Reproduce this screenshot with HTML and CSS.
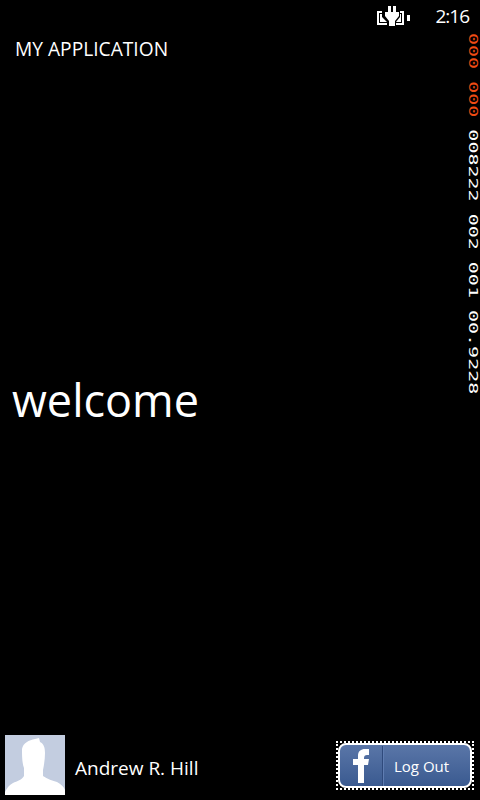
FILE: index.html
```html
<!DOCTYPE html>
<html lang="en">
<head>
    <meta charset="UTF-8">
    <meta name="viewport" content="width=device-width, initial-scale=1.0">
    <title>My Application</title>
    <link rel="stylesheet" href="styles.css">
</head>
<body>
    <div class="status-bar">
        <svg class="battery" width="34" height="20" viewBox="0 0 34 20">
            <path fill="#fff" fill-rule="evenodd" d="M0 5h27v14H0zM2 7v10h23V7z"/>
            <rect x="3" y="8" width="21" height="8" fill="#fff"/>
            <rect x="30" y="9" width="3" height="6" fill="#fff"/>
            <path fill="#000" d="M5 5h18v6l-4 5v3H10v-3l-5-5z"/>
            <rect x="11" y="0" width="3" height="7" fill="#fff"/>
            <rect x="16" y="0" width="3" height="7" fill="#fff"/>
            <path fill="#fff" d="M8 6h14v4l-4 5v5h-6v-5l-4-5z"/>
        </svg>
        <span class="clock">2:16</span>
    </div>

    <header class="app-header">MY APPLICATION</header>

    <main class="content">
        <h1 class="welcome">welcome</h1>
    </main>

    <footer class="footer">
        <div class="profile">
            <svg class="avatar" width="60" height="60" viewBox="0 0 60 60">
                <rect width="60" height="60" fill="#c3cde0"/>
                <path fill="#fff" d="M17 14C18 8 24 5 30 4L34 3L35 7C39 9 40 13 40 18C40 24 39 30 38 35V41C42 44 48 46 52 47C56 49 59 52 60 55V60H0V57C2 53 4 50 8 48C12 46 17 45 19 41V33C17 28 17 20 17 14Z"/>
            </svg>
            <span class="name">Andrew R. Hill</span>
        </div>
        <div class="logout-focus">
            <button class="logout">
                <span class="fb-mark">
                    <svg width="16" height="34" viewBox="0 0 16 34">
                        <path fill="#fff" d="M5 34V16H0v-6h5V7c0-5 3-7 7-7h4v6h-2c-2 0-3 1-3 3v1h5l-1 6h-4v18z"/>
                    </svg>
                </span>
                <span class="logout-label">Log Out</span>
            </button>
        </div>
    </footer>

    <div class="counters"><span class="over">000 000</span> 008222 002 001 00.9228</div>
</body>
</html>
```

FILE: styles.css
```css
body {
    font-family: 'Open Sans', sans-serif;
    background: #000;
    color: #fff;
    margin: 0;
    padding: 0;
    display: flex;
    flex-direction: column;
    height: 800px;
    overflow: hidden;
    position: relative;
}
.status-bar {
    display: flex;
    justify-content: flex-end;
    align-items: center;
    height: 32px;
    padding-right: 11px;
}
.battery {
    margin-right: 24px;
}
.clock {
    font-size: 19px;
    letter-spacing: -1px;
    line-height: 32px;
}
.app-header {
    font-size: 19.2px;
    line-height: 34px;
    padding-left: 15px;
}
.content {
    flex: 1;
    display: flex;
    align-items: center;
}
.welcome {
    margin: 0;
    padding: 0 0 3px 12px;
    font-size: 45px;
    font-weight: 400;
}
.footer {
    display: flex;
    justify-content: space-between;
    align-items: flex-end;
    padding: 0 6px 5px 5px;
}
.profile {
    display: flex;
    align-items: center;
    gap: 10px;
}
.avatar {
    display: block;
}
.name {
    font-size: 19px;
    padding-top: 5px;
}
.logout-focus {
    border: 2px dotted #fff;
    margin-bottom: 5px;
}
.logout {
    display: flex;
    align-items: center;
    width: 134px;
    height: 45px;
    padding: 0;
    border: 2px solid #fff;
    border-radius: 8px;
    background: linear-gradient(#5a76a8, #3a5a90);
    color: #fff;
    font-family: inherit;
}
.fb-mark {
    display: flex;
    align-items: center;
    justify-content: center;
    width: 42px;
    height: 40px;
    border-right: 1px solid #2f4a7c;
    box-shadow: 1px 0 0 #5f7db2;
}
.logout-label {
    font-size: 15px;
    padding: 1px 0 0 11px;
}
/* frame rate counters run down the right edge */
.counters {
    position: absolute;
    top: 33px;
    left: 467px;
    width: 12px;
    writing-mode: vertical-rl;
    white-space: pre;
    font-family: 'DejaVu Sans Mono', monospace;
    font-size: 13px;
    line-height: 12px;
    transform: scaleY(1.5385);
    transform-origin: top;
}
.over {
    color: #f04c14;
}
```
